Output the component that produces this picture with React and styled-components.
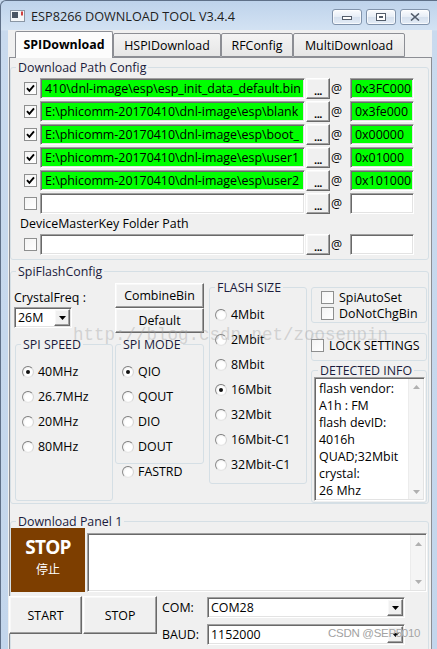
import React from 'react';
import styled, { createGlobalStyle } from 'styled-components';

const UI_FONT = "'Open Sans', 'Noto Sans', 'Noto Sans CJK SC', sans-serif";

const GlobalStyle = createGlobalStyle`
  * { box-sizing: border-box; }
  html, body { margin: 0; padding: 0; background: #c6d8ed; }
  body { font-family: ${UI_FONT}; font-size: 12.4px; color: #000; }
`;

const Window = styled.div`
  position: relative;
  width: 437px;
  height: 649px;
  overflow: hidden;
  display: flex;
  flex-direction: column;
  border-top: 1px solid #5f7088;
  border-left: 1px solid #5f7088;
  border-top-left-radius: 6px;
  background: linear-gradient(180deg, #bed3eb 0, #d3e2f3 29px, #c9daee 30px, #c3d6ec 100%);
`;

const TitleBar = styled.div`
  flex: none;
  height: 29px;
  display: flex;
  align-items: center;
  padding-left: 9px;
`;

const Title = styled.span`
  margin-left: 5px;
  font-size: 12.7px;
  color: #1e1e1e;
`;

const Controls = styled.div`
  margin-left: auto;
  margin-right: 7px;
  align-self: flex-start;
  margin-top: 8px;
  display: flex;
  gap: 4px;
`;

const CapButton = styled.div`
  width: 30px;
  height: 16px;
  border: 1px solid #8193ab;
  border-radius: 3px;
  background: linear-gradient(#fbfcfe, #e6edf6 50%, #d5e0ee 51%, #e4ecf6);
  box-shadow: inset 0 0 0 1px rgba(255, 255, 255, 0.7);
  display: flex;
  align-items: center;
  justify-content: center;
`;

const Frame = styled.div`
  flex: 1;
  min-height: 0;
  overflow: hidden;
  display: flex;
`;

const Client = styled.div`
  margin-left: 7px;
  width: 424px;
  background: #f0f0f0;
  display: flex;
  flex-direction: column;
`;

const TabStrip = styled.div`
  flex: none;
  height: 27px;
  display: flex;
  align-items: flex-end;
  padding-left: 7px;
`;

const Tab = styled.div`
  position: relative;
  z-index: ${p => (p.$active ? 1 : 0)};
  width: ${p => p.$w}px;
  height: ${p => (p.$active ? 27 : 24)}px;
  margin-bottom: ${p => (p.$active ? -1 : 0)}px;
  border: 1px solid #8c8e94;
  border-bottom: ${p => (p.$active ? 'none' : '1px solid #8c8e94')};
  border-radius: 2px 2px 0 0;
  background: ${p => (p.$active ? '#fcfcfc' : 'linear-gradient(#f4f4f4, #e6e6e6)')};
  font-weight: ${p => (p.$active ? 700 : 400)};
  display: flex;
  align-items: center;
  justify-content: center;
  padding-bottom: ${p => (p.$active ? 1 : 0)}px;
  white-space: nowrap;
`;

const TabPage = styled.div`
  flex: none;
  margin-left: 1px;
  width: 423px;
  border: 1px solid #8c8e94;
  border-bottom: none;
  padding: 0 1px 20px 0;
  background: #f0f0f0;
`;

const GroupBox = styled.div`
  border: 1px solid #d5dfe5;
  border-radius: 3px;
  width: ${p => (p.$w ? `${p.$w}px` : 'auto')};
  height: ${p => (p.$h ? `${p.$h}px` : 'auto')};
  margin: ${p => p.$margin || '0'};
`;

const Legend = styled.div`
  width: fit-content;
  height: 15px;
  line-height: 15px;
  margin: -8px 0 0 ${p => p.$left ?? 5}px;
  padding: 0 2px;
  background: #f0f0f0;
  color: #1b1b3c;
  white-space: nowrap;
`;

const PathBody = styled.div`
  display: flex;
  flex-direction: column;
  gap: 2px;
  padding: 3px 0 4px 13px;
`;

const PathRow = styled.div`
  display: flex;
  align-items: center;
  height: 21px;
`;

const BoxMark = styled.span`
  width: 13px;
  height: 13px;
  flex: none;
  border: 1px solid #8e8f8f;
  background: linear-gradient(135deg, #f4f4f4, #ffffff);
  display: flex;
  align-items: center;
  justify-content: center;
  margin: ${p => p.$margin || '0'};
`;

const Sunken = styled.div`
  width: ${p => p.$w}px;
  height: 21px;
  flex: none;
  border: 1px solid;
  border-color: #a0a0a0 #ffffff #ffffff #a0a0a0;
  box-shadow: inset 1px 1px 0 #696969, inset -1px -1px 0 #e3e3e3;
  background: ${p => (p.$green ? '#00ff00' : '#ffffff')};
  padding: 0 0 0 4px;
  line-height: 19px;
  white-space: nowrap;
  overflow: hidden;
`;

const Raised = styled.div`
  border: 1px solid;
  border-color: #ffffff #696969 #696969 #ffffff;
  box-shadow: inset -1px -1px 0 #a0a0a0, inset 1px 1px 0 #f8f8f8;
  background: #f0f0f0;
  display: flex;
  align-items: center;
  justify-content: center;
  flex: none;
`;

const DotsButton = styled(Raised)`
  width: 24px;
  height: 21px;
  margin-left: 1px;
  font-weight: 700;
  font-size: 11px;
  letter-spacing: -0.5px;
  padding-top: 3px;
`;

const At = styled.span`
  width: 20px;
  padding-left: 1px;
  flex: none;
`;

const PlainLabel = styled.div`
  height: 16px;
  line-height: 16px;
  margin-left: -4px;
`;

const FlashBody = styled.div`
  display: flex;
  align-items: flex-start;
  padding-left: 3px;
`;

const Column = styled.div`
  width: ${p => p.$w}px;
  margin-left: ${p => p.$gap || 0}px;
  display: flex;
  flex-direction: column;
  flex: none;
`;

const FieldLabel = styled.div`
  height: 15px;
  line-height: 15px;
  margin-top: ${p => p.$top || 0}px;
`;

const Combo = styled(Sunken)`
  display: flex;
  align-items: center;
  padding: 0 1px 0 3px;
  margin-top: ${p => p.$top || 0}px;
  line-height: normal;
`;

const ComboText = styled.span`
  flex: 1;
`;

const DropButton = styled(Raised)`
  width: 16px;
  height: 17px;
`;

const PushButton = styled(Raised)`
  width: ${p => p.$w}px;
  height: ${p => p.$h}px;
  margin: ${p => p.$margin || '0'};
`;

const RadioList = styled.div`
  display: flex;
  flex-direction: column;
  gap: 10px;
  padding: ${p => p.$pad};
`;

const RadioRow = styled.div`
  display: flex;
  align-items: center;
  height: 15px;
  gap: 4px;
  padding-left: ${p => p.$left || 0}px;
`;

const RadioDot = styled.span`
  width: 12px;
  height: 12px;
  flex: none;
  border-radius: 50%;
  border: 1px solid;
  border-color: #7c7c7c #d6d6d6 #e6e6e6 #8c8c8c;
  background: radial-gradient(circle at 55% 55%, #ffffff 40%, #e4e4e4 100%);
  display: flex;
  align-items: center;
  justify-content: center;

  &::after {
    content: '';
    width: 4px;
    height: 4px;
    border-radius: 50%;
    background: ${p => (p.$on ? '#111' : 'transparent')};
  }
`;

const CheckRow = styled.div`
  display: flex;
  align-items: center;
  height: ${p => p.$h || 16}px;
  gap: 5px;
  padding-left: ${p => p.$left || 0}px;
  margin-top: ${p => p.$top || 0}px;
`;

const InfoBox = styled.div`
  display: flex;
  width: ${p => p.$w}px;
  height: ${p => p.$h}px;
  margin: ${p => p.$margin || '0'};
  border: 1px solid;
  border-color: #a0a0a0 #ffffff #ffffff #a0a0a0;
  box-shadow: inset 1px 1px 0 #696969, inset -1px -1px 0 #e3e3e3;
  background: #ffffff;
  padding: 1px;
  flex: none;
`;

const InfoText = styled.div`
  flex: 1;
  padding: 1px 0 0 3px;
  line-height: 17px;
  overflow: hidden;
`;

const ScrollBar = styled.div`
  width: 15px;
  background: #f5f5f5;
  border-left: 1px solid #ececec;
  display: flex;
  flex-direction: column;
  justify-content: space-between;
  align-items: center;
  padding: ${p => p.$pad || '6px 0'};
`;

const PanelRow = styled.div`
  display: flex;
  align-items: flex-end;
  margin-top: -1px;
`;

const StopBlock = styled.div`
  width: 74px;
  height: 64px;
  background: #7d3e00;
  color: #ffffff;
  display: flex;
  flex-direction: column;
  align-items: center;
  padding-top: 8px;
  flex: none;
`;

const StopBig = styled.div`
  font-size: 19px;
  font-weight: 700;
  line-height: 22px;
  letter-spacing: -0.8px;
`;

const StopSmall = styled.div`
  font-family: 'Noto Sans CJK SC', sans-serif;
  font-size: 12px;
  line-height: 18px;
  margin-top: 2px;
`;

const ActionRow = styled.div`
  display: flex;
  align-items: flex-start;
  margin-top: 4px;
`;

const PortGrid = styled.div`
  display: grid;
  grid-template-columns: 45px 198px;
  row-gap: 6px;
  margin: 1px 0 0 5px;
  align-items: center;
`;

const Watermark = styled.div`
  position: absolute;
  left: ${p => p.$x}px;
  top: ${p => p.$y}px;
  pointer-events: none;
  white-space: nowrap;
`;

const BlogMark = styled(Watermark)`
  font-family: 'Liberation Mono', monospace;
  font-size: 17.5px;
  color: rgba(160, 160, 160, 0.4);
`;

const CsdnMark = styled(Watermark)`
  font-family: 'Liberation Sans', sans-serif;
  font-size: 11.5px;
  letter-spacing: -0.3px;
  color: #a2a2a2;
  text-shadow: 0 0 1px #fff;
`;

const Arrow = ({ up, color = '#000' }) => (
  <svg width="7" height="4" viewBox="0 0 7 4">
    <path d={up ? 'M0 4 L3.5 0 L7 4 Z' : 'M0 0 L7 0 L3.5 4 Z'} fill={color} />
  </svg>
);

const Check = ({ on, margin }) => (
  <BoxMark $margin={margin}>
    {on && (
      <svg width="9" height="9" viewBox="0 0 9 9">
        <path d="M1 4.2 L3.4 6.8 L8 1.4" fill="none" stroke="#000" strokeWidth="1.9" />
      </svg>
    )}
  </BoxMark>
);

const Radio = ({ on, label, left }) => (
  <RadioRow $left={left}>
    <RadioDot $on={on} />
    <span>{label}</span>
  </RadioRow>
);

const paths = [
  { on: true, path: '410\\dnl-image\\esp\\esp_init_data_default.bin', addr: '0x3FC000' },
  { on: true, path: 'E:\\phicomm-20170410\\dnl-image\\esp\\blank', addr: '0x3fe000' },
  { on: true, path: 'E:\\phicomm-20170410\\dnl-image\\esp\\boot_', addr: '0x00000' },
  { on: true, path: 'E:\\phicomm-20170410\\dnl-image\\esp\\user1', addr: '0x01000' },
  { on: true, path: 'E:\\phicomm-20170410\\dnl-image\\esp\\user2', addr: '0x101000' },
  { on: false, path: '', addr: '' },
];

const PathLine = ({ on, path, addr }) => (
  <PathRow>
    <Check on={on} margin="0 3px 0 0" />
    <Sunken $w={265} $green={on}>{path}</Sunken>
    <DotsButton>...</DotsButton>
    <At>@</At>
    <Sunken $w={64} $green={on}>{addr}</Sunken>
  </PathRow>
);

const info = ['flash vendor:', 'A1h : FM', 'flash devID:', '4016h', 'QUAD;32Mbit', 'crystal:', '26 Mhz'];

export default function App() {
  return (
    <>
      <GlobalStyle />
      <Window>
        <TitleBar>
          <svg width="16" height="12" viewBox="0 0 16 12">
            <rect x="0.5" y="0.5" width="14" height="11" fill="#f4f6f8" stroke="#8a96a4" />
            <rect x="2" y="2" width="6" height="6" fill="#4a5563" />
            <rect x="11" y="1.5" width="2" height="4" fill="#d04040" />
          </svg>
          <Title>ESP8266 DOWNLOAD TOOL V3.4.4</Title>
          <Controls>
            <CapButton>
              <svg width="10" height="6" viewBox="0 0 10 6">
                <rect x="0.5" y="2.5" width="9" height="3" fill="#fff" stroke="#535d6b" />
              </svg>
            </CapButton>
            <CapButton>
              <svg width="10" height="8" viewBox="0 0 10 8">
                <rect x="0.5" y="0.5" width="9" height="7" fill="#fff" stroke="#535d6b" />
                <rect x="3" y="3" width="4" height="2" fill="#535d6b" />
              </svg>
            </CapButton>
            <CapButton>
              <svg width="10" height="8" viewBox="0 0 10 8">
                <path d="M1 0.5 L9 7.5 M9 0.5 L1 7.5" stroke="#535d6b" strokeWidth="1.6" />
              </svg>
            </CapButton>
          </Controls>
        </TitleBar>

        <Frame>
          <Client>
            <TabStrip>
              <Tab $w={98} $active>SPIDownload</Tab>
              <Tab $w={108}>HSPIDownload</Tab>
              <Tab $w={72}>RFConfig</Tab>
              <Tab $w={112}>MultiDownload</Tab>
            </TabStrip>

            <TabPage>
              <GroupBox $margin="9px 1px 0 0">
                <Legend>Download Path Config</Legend>
                <PathBody>
                  {paths.map((p, i) => (
                    <PathLine key={i} {...p} />
                  ))}
                  <PlainLabel>DeviceMasterKey Folder Path</PlainLabel>
                  <PathLine on={false} path="" addr="" />
                </PathBody>
              </GroupBox>

              <GroupBox $margin="11px 1px 0 0">
                <Legend>SpiFlashConfig</Legend>
                <FlashBody>
                  <Column $w={98}>
                    <FieldLabel $top={11}>CrystalFreq :</FieldLabel>
                    <Combo $w={58} $top={2}>
                      <ComboText>26M</ComboText>
                      <DropButton><Arrow /></DropButton>
                    </Combo>
                    <GroupBox $w={98} $h={157} $margin="16px 0 0 1px">
                      <Legend>SPI SPEED</Legend>
                      <RadioList $pad="12px 0 0 6px">
                        <Radio on label="40MHz" />
                        <Radio label="26.7MHz" />
                        <Radio label="20MHz" />
                        <Radio label="80MHz" />
                      </RadioList>
                    </GroupBox>
                  </Column>

                  <Column $w={89} $gap={3}>
                    <PushButton $w={89} $h={25} $margin="4px 0 0 0">CombineBin</PushButton>
                    <PushButton $w={89} $h={25}>Default</PushButton>
                    <GroupBox $w={89} $h={120} $margin="11px 0 0 0">
                      <Legend>SPI MODE</Legend>
                      <RadioList $pad="12px 0 0 6px">
                        <Radio on label="QIO" />
                        <Radio label="QOUT" />
                        <Radio label="DIO" />
                        <Radio label="DOUT" />
                      </RadioList>
                    </GroupBox>
                    <Radio label="FASTRD" left={7} />
                  </Column>

                  <Column $w={98} $gap={5}>
                    <GroupBox $w={98} $h={197} $margin="8px 0 0 0">
                      <Legend>FLASH SIZE</Legend>
                      <RadioList $pad="12px 0 0 5px">
                        <Radio label="4Mbit" />
                        <Radio label="2Mbit" />
                        <Radio label="8Mbit" />
                        <Radio on label="16Mbit" />
                        <Radio label="32Mbit" />
                        <Radio label="16Mbit-C1" />
                        <Radio label="32Mbit-C1" />
                      </RadioList>
                    </GroupBox>
                  </Column>

                  <Column $w={116} $gap={4}>
                    <GroupBox $h={36} $margin="8px 0 0 0">
                      <CheckRow $left={9} $top={1}>
                        <Check />
                        <span>SpiAutoSet</span>
                      </CheckRow>
                      <CheckRow $left={9}>
                        <Check />
                        <span>DoNotChgBin</span>
                      </CheckRow>
                    </GroupBox>
                    <GroupBox $h={28} $margin="10px 0 0 0">
                      <CheckRow $h={22}>
                        <Check margin="0 0 0 -1px" />
                        <span>LOCK SETTINGS</span>
                      </CheckRow>
                    </GroupBox>
                    <GroupBox $h={133} $margin="9px 0 0 0">
                      <Legend $left={6}>DETECTED INFO</Legend>
                      <InfoBox $w={111} $h={124} $margin="-1px 0 0 2px">
                        <InfoText>
                          {info.map(line => (
                            <div key={line}>{line}</div>
                          ))}
                        </InfoText>
                        <ScrollBar $pad="6px 0 5px">
                          <Arrow up color="#b0b0b0" />
                          <Arrow color="#b0b0b0" />
                        </ScrollBar>
                      </InfoBox>
                    </GroupBox>
                  </Column>
                </FlashBody>
              </GroupBox>

              <GroupBox $margin="17px 1px 0 0" $h={140}>
                <Legend>Download Panel 1</Legend>
                <PanelRow>
                  <StopBlock>
                    <StopBig>STOP</StopBig>
                    <StopSmall>停止</StopSmall>
                  </StopBlock>
                  <InfoBox $w={340} $h={59} $margin="0 0 0 2px">
                    <InfoText />
                    <ScrollBar $pad="7px 0 6px">
                      <Arrow up color="#b0b0b0" />
                      <Arrow color="#b0b0b0" />
                    </ScrollBar>
                  </InfoBox>
                </PanelRow>
                <ActionRow>
                  <PushButton $w={73} $h={38} $margin="0 1px 0 -2px">START</PushButton>
                  <PushButton $w={74} $h={38}>STOP</PushButton>
                  <PortGrid>
                    <span>COM:</span>
                    <Combo $w={198}>
                      <ComboText>COM28</ComboText>
                      <DropButton><Arrow /></DropButton>
                    </Combo>
                    <span>BAUD:</span>
                    <Combo $w={198}>
                      <ComboText>1152000</ComboText>
                      <DropButton><Arrow /></DropButton>
                    </Combo>
                  </PortGrid>
                </ActionRow>
              </GroupBox>
            </TabPage>
          </Client>
        </Frame>

        <BlogMark $x={72} $y={324}>http://blog.csdn.net/zoosenpin</BlogMark>
        <CsdnMark $x={327} $y={626}>CSDN @SEP5010</CsdnMark>
      </Window>
    </>
  );
}
